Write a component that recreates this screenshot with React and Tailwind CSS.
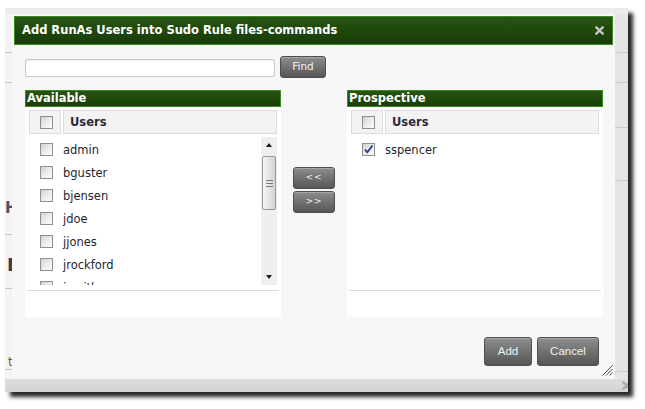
import React from 'react';

const available = ['admin', 'bguster', 'bjensen', 'jdoe', 'jjones', 'jrockford', 'jsmith'];

const Checkbox = ({ checked = false }) => (
  <span className="flex h-[13px] w-[13px] shrink-0 items-center justify-center border border-[#8f8f8f] bg-gradient-to-br from-[#d2d2d2] via-[#ebebeb] to-[#fdfdfd]">
    {checked && (
      <svg width="11" height="11" viewBox="0 0 11 11">
        <path d="M2 5.5 L4.3 8.3 L9.5 1.5" fill="none" stroke="#2a3f8c" strokeWidth="1.9" />
      </svg>
    )}
  </span>
);

const GrayButton = ({ children, className = '' }) => (
  <button
    type="button"
    className={
      'flex items-center justify-center rounded-[3px] border border-[#4e4e4e] bg-gradient-to-b from-[#8e8e8e] to-[#565656] text-[#f2f2f2] shadow-[inset_0_1px_0_rgba(255,255,255,0.22)] ' +
      className
    }
  >
    {children}
  </button>
);

const Row = ({ name, checked }) => (
  <div className="flex h-[23px] shrink-0 items-center pl-[11px]">
    <Checkbox checked={checked} />
    <span className="ml-[10px] mt-[2px] text-[11.5px] leading-none text-[#1f1f2e]">{name}</span>
  </div>
);

const Scrollbar = () => (
  <div className="flex w-[16px] shrink-0 flex-col bg-[#efefef]">
    <div className="flex h-[16px] items-center justify-center">
      <span className="h-0 w-0 border-x-[3.5px] border-b-[4px] border-x-transparent border-b-[#1a1a1a]" />
    </div>
    <div className="mx-px mt-[3px] flex h-[54px] flex-col items-center justify-center gap-[2px] rounded-[2px] border border-[#9a9a9a] bg-gradient-to-r from-[#f6f6f6] to-[#d3d3d3]">
      <span className="h-px w-[7px] bg-[#7a7a7a]" />
      <span className="h-px w-[7px] bg-[#7a7a7a]" />
      <span className="h-px w-[7px] bg-[#7a7a7a]" />
    </div>
    <div className="flex-1" />
    <div className="flex h-[16px] items-center justify-center">
      <span className="h-0 w-0 border-x-[3.5px] border-t-[4px] border-x-transparent border-t-[#1a1a1a]" />
    </div>
  </div>
);

const Panel = ({ title, children }) => (
  <div className="flex w-[256px] shrink-0 flex-col">
    <div className="flex h-[17px] items-center border border-[#3b8b1f] bg-gradient-to-b from-[#285512] to-[#173e08] pl-px pt-px text-[11.5px] font-bold leading-none text-white">
      {title}
    </div>
    <div className="flex h-[210px] flex-col bg-white px-[4px] pt-[3px]">
      <div className="flex h-[24px] gap-[2px]">
        <div className="flex w-[32px] items-center border border-[#dcdcdc] bg-[#f3f3f3] pl-[10px]">
          <Checkbox />
        </div>
        <div className="flex flex-1 items-center border border-[#dcdcdc] bg-[#f3f3f3] pl-[6px] pt-[2px] text-[11.5px] font-bold text-[#2b2b3b]">
          Users
        </div>
      </div>
      <div className="mt-[3px] flex h-[148px]">{children}</div>
      <div className="-mx-[2px] mt-[5px] h-px bg-[#dadada]" />
    </div>
  </div>
);

const LeftStrip = () => (
  <div className="flex w-[7px] shrink-0 flex-col overflow-hidden bg-[#f3f3f3]">
    <div className="h-[39px] border-b border-[#c4c4c4]" />
    <div className="h-[30px] border-b border-[#c4c4c4]" />
    <div className="flex h-[152px] flex-col justify-end border-b border-[#c4c4c4] pb-[18px]">
      <span className="text-[15px] font-bold leading-none text-[#4a5066]">H</span>
    </div>
    <div className="flex h-[54px] flex-col justify-end border-b border-[#c4c4c4] pb-[14px] pl-[2px]">
      <span className="text-[18px] font-bold leading-none text-[#3d3d44]">D</span>
    </div>
    <div className="flex h-[81px] flex-col justify-end border-b border-[#c4c4c4] pb-[1px] pl-[3px]">
      <span className="text-[12px] leading-none text-[#7a5a2a]">t</span>
    </div>
    <div className="flex-1" />
  </div>
);

const RightStrip = () => (
  <div className="flex w-[13px] shrink-0 flex-col bg-[#e5e5e5]">
    <div className="h-[39px] border-b border-[#cacaca]" />
    <div className="h-[30px] border-b border-[#cacaca]" />
    <div className="h-[45px] border-b border-[#cacaca]" />
    <div className="h-[53px] border-b border-[#cacaca]" />
    <div className="h-[191px] border-b border-[#cacaca]" />
    <div className="flex-1" />
  </div>
);

const Dialog = () => (
  <div className="relative flex w-[603px] shrink-0 flex-col bg-[#f7f7f7] p-[2px]">
    <div className="flex h-[29px] items-center justify-between border border-[#3b8b1f] bg-gradient-to-b from-[#285512] to-[#163c07] pl-[7px] pr-[8px]">
      <span className="text-[11.5px] font-bold text-white">Add RunAs Users into Sudo Rule files-commands</span>
      <svg width="9" height="9" viewBox="0 0 9 9">
        <path d="M1.3 1.3 L7.7 7.7 M7.7 1.3 L1.3 7.7" stroke="#c6c6c6" strokeWidth="2.4" strokeLinecap="round" />
      </svg>
    </div>

    <div className="flex flex-col pl-[11px] pr-[10px]">
      <div className="mt-[11px] flex h-[22px] items-center">
        <input
          type="text"
          className="mt-[2px] h-[18px] w-[250px] rounded-[2px] border border-[#c8c8c8] bg-white shadow-[inset_0_1px_1px_rgba(0,0,0,0.06)] outline-none"
        />
        <GrayButton className="ml-[5px] h-[22px] w-[46px] text-[10.5px]">Find</GrayButton>
      </div>

      <div className="mt-[12px] flex gap-[12px]">
        <Panel title="Available">
          <div className="flex flex-1 flex-col overflow-hidden pt-px">
            {available.map((name) => (
              <Row key={name} name={name} />
            ))}
          </div>
          <Scrollbar />
        </Panel>

        <div className="flex w-[42px] shrink-0 flex-col gap-[2px] pt-[77px]">
          <GrayButton className="h-[22px] w-[42px] text-[9px] tracking-[1px]">&lt;&lt;</GrayButton>
          <GrayButton className="h-[22px] w-[42px] text-[9px] tracking-[1px]">&gt;&gt;</GrayButton>
        </div>

        <Panel title="Prospective">
          <div className="flex flex-1 flex-col pt-px">
            <Row name="sspencer" checked />
          </div>
        </Panel>
      </div>

      <div className="mt-[20px] flex justify-end gap-[5px] pr-[4px] font-['Liberation_Sans',sans-serif]">
        <GrayButton className="h-[29px] w-[48px] text-[11.5px]">Add</GrayButton>
        <GrayButton className="h-[29px] w-[62px] text-[11.5px]">Cancel</GrayButton>
      </div>
    </div>

    <svg className="absolute bottom-[3px] right-[2px]" width="11" height="11" viewBox="0 0 11 11">
      <path d="M10.5 0.5 L0.5 10.5 M10.5 4 L4 10.5 M10.5 7.5 L7.5 10.5" stroke="#4a4a4a" strokeWidth="1" />
    </svg>
  </div>
);

export default function App() {
  return (
    <div className="h-[409px] w-[645px] overflow-hidden bg-white pl-[5px] pt-[8px] font-['DejaVu_Sans',sans-serif]">
      <div className="flex h-[384px] w-[623px] flex-col bg-[#e9e9e9] shadow-[5px_5px_4px_rgba(0,0,0,0.85)]">
        <div className="h-[6px] bg-[#ececec]" />
        <div className="flex h-[365px]">
          <LeftStrip />
          <Dialog />
          <RightStrip />
        </div>
        <div className="flex h-[13px] items-start justify-end overflow-hidden bg-gradient-to-b from-[#dedede] to-[#d3d3d3]">
          <svg className="mr-[-3px] mt-[2px]" width="9" height="9" viewBox="0 0 9 9">
            <path d="M1.3 1.3 L7.7 7.7 M7.7 1.3 L1.3 7.7" stroke="#a9a9a9" strokeWidth="2.2" strokeLinecap="round" />
          </svg>
        </div>
      </div>
    </div>
  );
}
